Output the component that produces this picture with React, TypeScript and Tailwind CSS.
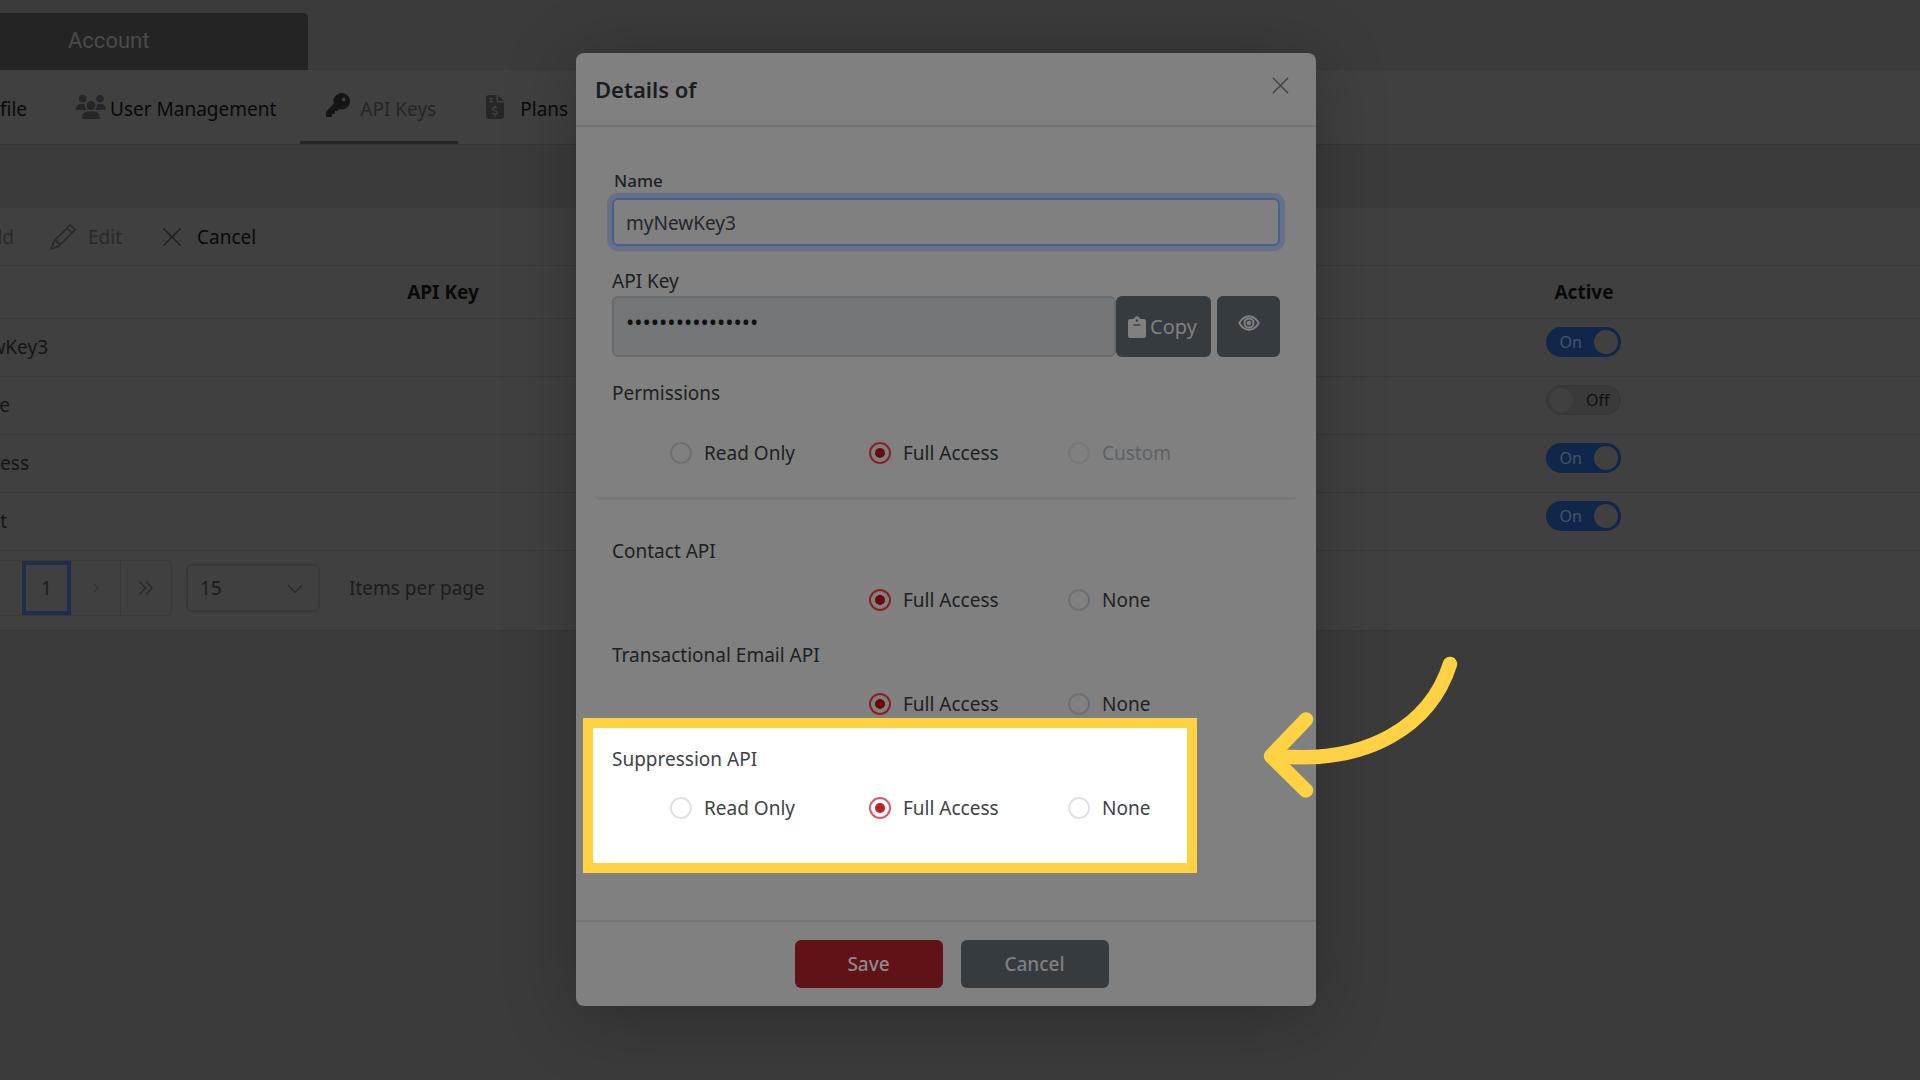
import React from "react";
import { FaUsers, FaKey, FaFileInvoiceDollar } from "react-icons/fa6";
import { BsPencil, BsXLg, BsChevronRight, BsChevronDown } from "react-icons/bs";

type Option = { label: string; checked?: boolean; disabled?: boolean };

function Choice({ group, option, bright }: { group: string; option: Option | null; bright?: boolean }) {
  if (!option) return <span className="w-[199px] shrink-0" />;
  const ring = bright
    ? "border-[#dee2e6] checked:border-[#dc5a60] checked:bg-[#bf1f28]"
    : option.disabled
      ? "border-[#767779]"
      : "border-[#6d7073] checked:border-[#862227] checked:bg-[#65090f]";
  const text = bright ? "text-[#3f4246]" : option.disabled ? "text-[#5e6265]" : "text-[#1d2022]";
  return (
    <label className={`flex w-[199px] shrink-0 items-center gap-3 text-[19px] leading-6 ${text}`}>
      <input
        type="radio"
        name={group}
        defaultChecked={option.checked}
        disabled={option.disabled}
        className={`size-[22px] shrink-0 appearance-none rounded-full border-2 bg-clip-content p-1 ${ring}`}
      />
      {option.label}
    </label>
  );
}

function Choices({ group, options, bright }: { group: string; options: (Option | null)[]; bright?: boolean }) {
  return (
    <div className="flex h-6">
      {options.map((o, i) => (
        <Choice key={i} group={group} option={o} bright={bright} />
      ))}
    </div>
  );
}

function Toggle({ on, label }: { on: boolean; label: string }) {
  return (
    <label className="mr-[2px] mb-[10px] inline-block align-middle">
      <input type="checkbox" defaultChecked={on} aria-label={label} className="sr-only" />
      {on ? (
        <span className="flex h-[30px] w-[75px] items-center justify-between rounded-full bg-[#10274a] pr-[3px] pl-[14px] text-base text-[#45536a]">
          On
          <span className="size-6 rounded-full bg-[#404040]" />
        </span>
      ) : (
        <span className="flex h-[30px] w-[75px] items-center justify-between rounded-full border border-[#363636] bg-[#3a3a3a] pr-[10px] pl-[2px] text-base text-[#101010]">
          <span className="size-6 rounded-full bg-[#404040]" />
          Off
        </span>
      )}
    </label>
  );
}

const rows = [
  { name: "wKey3", on: true, width: "w-[48px]" },
  { name: "e", on: false, width: "w-[10px]" },
  { name: "ess", on: true, width: "w-[29px]" },
  { name: "t", on: true, width: "w-[7px]" },
];

const full: Option = { label: "Full Access", checked: true };
const none: Option = { label: "None" };
const read: Option = { label: "Read Only" };

export default function App() {
  return (
    <div className="relative min-h-screen overflow-hidden bg-[#3b3b3b] pt-[13px] font-['Noto_Sans',sans-serif] text-[19px] leading-6 text-[#090909]">
      <main>
        <div className="flex">
          <a href="#account" className="flex h-[57px] w-[308px] items-center rounded-tr-[5px] bg-[#242424] pb-[2px] pl-[68px] font-['Roboto',sans-serif] text-[22px] text-[#4b4b4b]">
            Account
          </a>
        </div>

        <nav className="flex h-[75px] border-b border-[#363636] bg-[#404040]">
          <a href="#profile" className="flex w-[27px] items-center justify-end pt-1">file</a>
          <a href="#users" className="ml-[49px] flex items-center gap-1 pt-1">
            <FaUsers className="mb-1 size-[30px] text-[#262626]" />
            User Management
          </a>
          <a href="#keys" className="ml-6 flex w-[158px] items-center gap-[10px] border-b-[3px] border-[#262626] pt-[7px] pl-[26px] text-[#262626]">
            <FaKey className="mb-2 size-6 text-[#151515]" />
            API Keys
          </a>
          <a href="#plans" className="ml-[25px] flex items-center gap-[13px] pt-1">
            <FaFileInvoiceDollar className="mb-1 size-6 text-[#262626]" />
            Plans
          </a>
        </nav>

        <section className="mt-[63px] bg-[#404040]">
          <div className="flex h-[58px] items-center border-b border-[#393939]">
            <button className="flex w-[14px] justify-end text-[#2a2a2a]">dd</button>
            <button className="ml-[36px] flex items-center gap-[12px] text-[#2a2a2a]">
              <BsPencil className="size-[26px]" />
              Edit
            </button>
            <button className="ml-[38px] flex items-center gap-[13px]">
              <BsXLg className="size-[24px] text-[#1f1f1f]" />
              Cancel
            </button>
          </div>

          <table className="w-full table-fixed">
            <colgroup>
              <col className="w-[200px]" />
              <col className="w-[486px]" />
              <col />
              <col className="w-[35%]" />
            </colgroup>
            <thead>
              <tr className="h-[52px] border-b border-[#393939]">
                <th />
                <th>API Key</th>
                <th />
                <th>Active</th>
              </tr>
            </thead>
            <tbody>
              {rows.map((r) => (
                <tr key={r.name} className="h-[58px] border-b border-[#393939] text-[#151515]">
                  <td>
                    <span className={`flex justify-end ${r.width}`}>{r.name}</span>
                  </td>
                  <td />
                  <td />
                  <td className="text-center">
                    <Toggle on={r.on} label={`Active ${r.name}`} />
                  </td>
                </tr>
              ))}
            </tbody>
          </table>

          <div className="flex h-[80px] items-center border-b border-[#373737] pb-[4px] text-[#1c1c1c]">
            <div className="flex h-[56px] items-center rounded-r-md border border-l-0 border-[#393939]">
              <button aria-current="page" className="ml-[22px] h-[54px] w-[49px] border-4 border-[#1f2f4b]">1</button>
              <button aria-label="Next page" className="flex h-full w-[50px] items-center justify-center border-r border-[#393939] text-[#2c2c2c]">
                <BsChevronRight className="size-3" />
              </button>
              <button aria-label="Last page" className="flex h-full w-[50px] items-center justify-center text-[#2a2a2a]">
                <svg viewBox="0 0 16 14" className="h-[14px] w-4" fill="none" stroke="currentColor" strokeWidth="1.500" strokeLinecap="round" strokeLinejoin="round">
                  <path d="M2 1l5.500 6L2 13M8.500 1l5.500 6-5.500 6" />
                </svg>
              </button>
            </div>
            <div className="relative ml-[14px]">
              <select aria-label="Items per page" className="h-[48px] w-[134px] appearance-none rounded-md border-2 border-[#393939] bg-transparent pl-3">
                <option>15</option>
              </select>
              <BsChevronDown className="pointer-events-none absolute top-4 right-4 size-[18px] text-[#262626]" />
            </div>
            <span className="ml-[29px]">Items per page</span>
          </div>
        </section>
      </main>

      <div className="absolute inset-0 flex items-start justify-center pt-[53px] pr-[28px]">
        <div role="dialog" aria-label="Details of" className="relative w-[740px] rounded-lg bg-[#808080] text-[#1d2022] shadow-[0_10px_70px_rgba(0,0,0,0.25)]">
          <header className="flex h-[74px] items-center justify-between border-b-2 border-[#757575] pr-[25px] pl-[19px]">
            <h2 className="text-[22px] font-semibold text-[#1a1d20]">Details of</h2>
            <button aria-label="Close" className="mb-2 text-[#3c4044]">
              <BsXLg className="size-[21px]" />
            </button>
          </header>

          <div className="px-[36px] pt-[42px]">
            <label htmlFor="key-name" className="ml-[2px] block text-[17px] font-medium">Name</label>
            <input
              id="key-name"
              defaultValue="myNewKey3"
              className="mt-[5px] block h-[48px] w-full rounded-md border-2 border-[#46608f] bg-transparent px-3 pt-[2px] text-[#24272a] ring-[5px] ring-[#667187] outline-none"
            />
            <label htmlFor="api-key" className="mt-[23px] block">API Key</label>
            <div className="mt-[3px] flex h-[61px]">
              <input
                id="api-key"
                type="password"
                readOnly
                defaultValue="abcdefghijklmnop"
                className="min-w-0 flex-1 rounded-md border-2 border-[#686b6e] bg-[#747678] px-3 pb-3 text-[22px] text-[#111]"
              />
              <button className="flex w-[95px] items-center justify-center gap-1 rounded-md bg-[#363b3f] pr-[2px] text-[20px] text-[#808080]">
                <svg viewBox="0 0 18 22" className="h-[22px] w-[18px]" fill="currentColor">
                  <path d="M2 3h3.500L7 1.200Q9-.600 11 1.200L12.500 3H16a2 2 0 0 1 2 2v15a2 2 0 0 1-2 2H2a2 2 0 0 1-2-2V5a2 2 0 0 1 2-2z" />
                  <circle cx="9" cy="4.500" r="1.200" fill="#363b3f" />
                  <path d="M5.500 9h7" stroke="#363b3f" strokeWidth="1.300" />
                </svg>
                Copy
              </button>
              <button aria-label="Show key" className="ml-[6px] flex w-[63px] items-center justify-center rounded-md bg-[#363b3f] pb-2 text-[#808080]">
                <svg viewBox="0 0 22 16" className="h-4 w-[22px]" fill="none" stroke="currentColor" strokeWidth="2">
                  <path d="M1.300 8Q5.200 1.200 11 1.200T20.700 8Q16.800 14.800 11 14.800T1.300 8z" />
                  <circle cx="11" cy="8" r="4.500" />
                  <circle cx="11" cy="8" r="1.300" />
                </svg>
              </button>
            </div>

            <p className="mt-6">Permissions</p>
            <div className="mt-[36px] pl-[58px]">
              <Choices group="permissions" options={[read, full, { label: "Custom", disabled: true }]} />
            </div>
          </div>
          <div className="mx-[19px] mt-[30px] h-[5px] rounded-b-md border-b-[3px] border-[#797979]" />

          <div className="px-[36px] pt-[39px]">
            <p>Contact API</p>
            <div className="mt-[25px] pl-[58px]">
              <Choices group="contact" options={[null, full, none]} />
            </div>
            <p className="mt-[31px]">Transactional Email API</p>
            <div className="mt-[25px] pl-[58px]">
              <Choices group="transactional" options={[null, full, none]} />
            </div>
          </div>

          <div className="mt-[2px] ml-[7px] h-[155px] w-[614px] border-[10px] border-[#ffd243] bg-white pt-[19px] pl-[19px] text-[#3f4246]">
            <p>Suppression API</p>
            <div className="mt-[25px] pl-[58px]">
              <Choices group="suppression" bright options={[read, full, none]} />
            </div>
          </div>

          <footer className="mt-[47px] flex h-[86px] items-center justify-center gap-[18px] border-t-2 border-[#757575] pl-[11px]">
            <button className="h-[48px] w-[148px] rounded-md bg-[#611217] font-medium text-[#8c8c8c]">Save</button>
            <button className="h-[48px] w-[148px] rounded-md bg-[#363b3f] font-medium text-[#808080]">Cancel</button>
          </footer>

          <svg viewBox="1260 650 200 156" className="absolute top-[597px] left-[684px] h-[156px] w-[200px]" fill="none" stroke="#ffd243" strokeWidth="14.500" strokeLinecap="round" strokeLinejoin="round">
            <path d="M1450 664C1431 724 1370 765 1276 756" />
            <path d="M1306 719.500 1271 756l35 34.500" />
          </svg>
        </div>
      </div>
    </div>
  );
}
